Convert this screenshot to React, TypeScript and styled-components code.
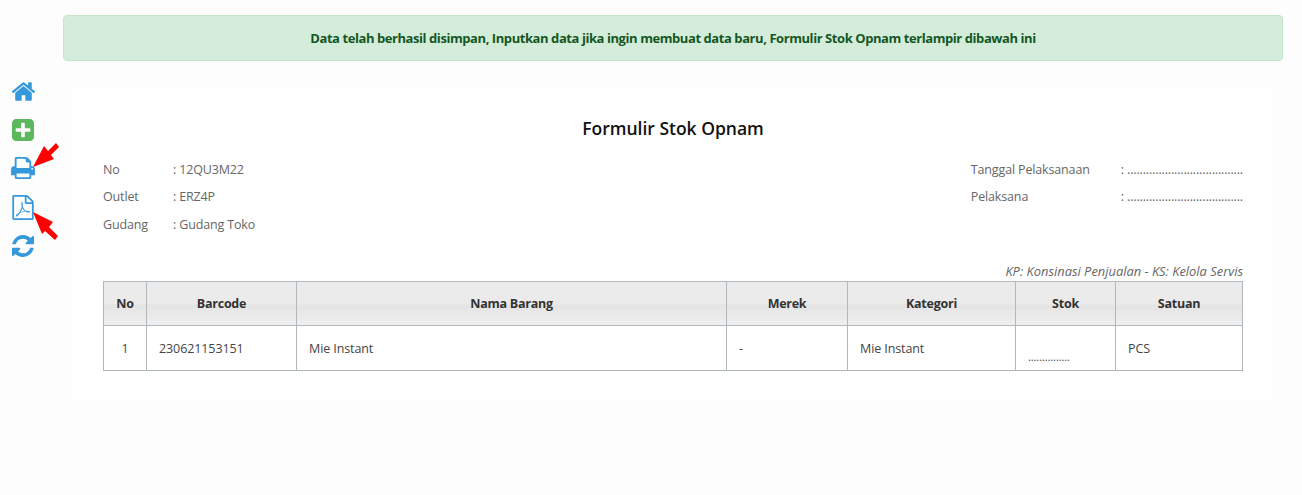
import React from "react";
import styled, { createGlobalStyle } from "styled-components";

const Global = createGlobalStyle`
  html, body { margin: 0; padding: 0; background: #fdfdfd; }
  body { font-family: "Open Sans", "Noto Sans", sans-serif; font-size: 13px; color: #555; }
`;

const Page = styled.div`
  display: flex;
  width: 1302px;
  height: 495px;
  overflow: hidden;
`;

const Sidebar = styled.nav`
  width: 63px;
  flex: none;
  padding-top: 72px;
  display: flex;
  flex-direction: column;
  align-items: flex-start;
  box-sizing: border-box;
  position: relative;
`;

const IconSlot = styled.div<{ $h: number; $c?: string }>`
  width: 46px;
  height: ${(p) => p.$h}px;
  display: flex;
  align-items: center;
  justify-content: center;
  color: ${(p) => p.$c ?? "#3498db"};
`;

const Arrows = styled.svg`
  position: absolute;
  left: 30px;
  top: 140px;
  width: 32px;
  height: 104px;
`;

const Main = styled.main`
  width: 1220px;
  padding-top: 15px;
`;

const Alert = styled.div`
  height: 46px;
  box-sizing: border-box;
  background: #d4edda;
  border: 1px solid #c3e6cb;
  border-radius: 4px;
  color: #155724;
  font-weight: 700;
  font-size: 13px;
  letter-spacing: -0.43px;
  display: flex;
  align-items: center;
  justify-content: center;
`;

const Card = styled.section`
  margin: 27px 10px 0;
  height: 312px;
  box-sizing: border-box;
  background: #fff;
  padding: 28px 30px 0;
`;

const Title = styled.h1`
  margin: 0;
  height: 24px;
  line-height: 24px;
  text-align: center;
  font-size: 17.5px;
  font-weight: 600;
  color: #111;
`;

const Meta = styled.div`
  margin-top: 20px;
  display: flex;
  justify-content: space-between;
  height: 103px;
`;

const MetaColumn = styled.div``;

const MetaRow = styled.div<{ $label: number }>`
  display: grid;
  grid-template-columns: ${(p) => p.$label}px auto;
  height: 27.4px;
  line-height: 20px;
  font-size: 12.5px;
  letter-spacing: -0.15px;
  color: #666;
`;

const Note = styled.div`
  text-align: right;
  font-style: italic;
  font-size: 12.9px;
  line-height: 17px;
  color: #666;
  height: 18px;
`;

const Table = styled.table`
  width: 1139px;
  border-collapse: collapse;
  table-layout: fixed;
  font-size: 12.5px;
`;

const Th = styled.th<{ $w: number }>`
  width: ${(p) => p.$w}px;
  height: 44px;
  box-sizing: border-box;
  padding: 0;
  border: 1px solid #aeb8bd;
  text-align: center;
  font-weight: 700;
  letter-spacing: -0.25px;
  color: #333;
  background: linear-gradient(#ebebeb 0%, #ebebeb 50%, #e4e4e4 52%, #efefef 100%);
`;

const Td = styled.td<{ $center?: boolean }>`
  height: 45px;
  box-sizing: border-box;
  padding: 0 12px;
  border: 1px solid #aeb8bd;
  color: #444;
  letter-spacing: -0.1px;
  text-align: ${(p) => (p.$center ? "center" : "left")};
`;

const Dots = styled.span`
  display: block;
  padding-top: 18px;
  line-height: 18px;
  font-size: 11px;
  letter-spacing: -0.1px;
`;

const HomeIcon = () => (
  <svg width="23" height="19" viewBox="96 256 1600 1280" fill="currentColor">
    <path d="M1472 992v480q0 26-19 45t-45 19h-384v-384h-256v384h-384q-26 0-45-19t-19-45v-480q0-1 .5-3t.5-3l575-474 575 474q1 2 1 6zm223-69l-62 74q-8 9-21 11h-3q-13 0-21-7l-692-577-692 577q-12 8-24 7-13-2-21-11l-62-74q-8-10-7-23.500t11-21.500l719-599q32-26 76-26t76 26l244 204v-195q0-14 9-23t23-9h192q14 0 23 9t9 23v408l219 182q10 8 11 21.500t-7 23.500z" />
  </svg>
);

const PlusIcon = () => (
  <svg width="22" height="22" viewBox="128 128 1536 1536" fill="currentColor">
    <path d="M1408 960v-128q0-26-19-45t-45-19h-320v-320q0-26-19-45t-45-19h-128q-26 0-45 19t-19 45v320h-320q-26 0-45 19t-19 45v128q0 26 19 45t45 19h320v320q0 26 19 45t45 19h128q26 0 45-19t19-45v-320h320q26 0 45-19t19-45zm256-544v960q0 119-84.500 203.500t-203.500 84.500h-960q-119 0-203.500-84.500t-84.500-203.500v-960q0-119 84.500-203.500t203.500-84.500h960q119 0 203.500 84.500t84.500 203.500z" />
  </svg>
);

const PrintIcon = () => (
  <svg width="24" height="22" viewBox="64 128 1664 1536" fill="currentColor">
    <path d="M448 1536h896v-256h-896v256zm0-640h896v-384h-160q-40 0-68-28t-28-68v-160h-640v640zm1152 64q0-26-19-45t-45-19-45 19-19 45 19 45 45 19 45-19 19-45zm128 0v416q0 13-9.500 22.500t-22.500 9.500h-224v160q0 40-28 68t-68 28h-960q-40 0-68-28t-28-68v-160h-224q-13 0-22.500-9.500t-9.500-22.500v-416q0-79 56.500-135.500t135.500-56.500h64v-544q0-40 28-68t68-28h672q40 0 88 20t76 48l152 152q28 28 48 76t20 88v256h64q79 0 135.500 56.500t56.500 135.500z" />
  </svg>
);

const PdfIcon = () => (
  <svg width="22" height="25" viewBox="128 0 1536 1792" fill="currentColor">
    <path d="M1596 380q28 28 48 76t20 88v1152q0 40-28 68t-68 28h-1344q-40 0-68-28t-28-68v-1600q0-40 28-68t68-28h896q40 0 88 20t76 48zm-444-244v376h376q-10-29-22-41l-313-313q-12-12-41-22zm384 1528v-1024h-416q-40 0-68-28t-28-68v-416h-768v1536h1280zm-514-593q33 26 84 56 59-7 117-7 147 0 177 49 16 22 2 52 0 1-1 2l-2 2v1q-6 38-71 38-48 0-115-20t-130-53q-221 24-392 83-153 262-242 262-15 0-28-7l-24-12q-1-1-6-5-10-10-6-36 9-40 56-91.500t132-96.500q14-9 23 6 2 2 2 4 52-85 107-197 68-136 104-262-24-82-30.500-159.500t6.500-127.500q11-40 42-40h22q23 0 35 15 18 21 9 68-2 6-4 8 1 3 1 8v30q-2 123-14 192 55 164 146 238zm-576 411q52-24 137-158-51 40-87.500 84t-49.500 74zm398-920q-15 42-2 132 1-7 7-44 0-3 7-43 1-4 4-8-1-1-1-2-1-2-1-3-1-22-13-36 0 1-1 2v2zm-124 661q135-54 284-81-2-1-13-9.500t-16-13.500q-76-67-127-176-27 86-83 197-30 56-45 83zm646-16q-24-24-140-24 76 28 124 28 14 0 18-1 0-1-2-3z" />
  </svg>
);

const SyncIcon = () => (
  <svg width="22" height="22" viewBox="128 128 1536 1536" fill="currentColor">
    <path d="M1639 1056q0 5-1 7-64 268-268 434.500t-478 166.500q-146 0-282.500-55t-243.500-157l-129 129q-19 19-45 19t-45-19-19-45v-448q0-26 19-45t45-19h448q26 0 45 19t19 45-19 45l-137 137q71 66 161 102t187 36q134 0 250-65t186-179q11-17 53-117 8-23 30-23h192q13 0 22.500 9.500t9.500 22.500zm25-800v448q0 26-19 45t-45 19h-448q-26 0-45-19t-19-45 19-45l138-138q-148-137-349-137-134 0-250 65t-186 179q-11 17-53 117-8 23-30 23h-199q-13 0-22.500-9.500t-9.500-22.500v-7q65-268 270-434.500t480-166.500q146 0 284 55.500t245 156.500l130-129q19-19 45-19t45 19 19 45z" />
  </svg>
);

const columns: [string, number][] = [
  ["No", 43], ["Barcode", 150], ["Nama Barang", 430], ["Merek", 121],
  ["Kategori", 168], ["Stok", 100], ["Satuan", 127],
];

export default function App() {
  return (
    <Page>
      <Global />
      <Sidebar>
        <IconSlot $h={38}><HomeIcon /></IconSlot>
        <IconSlot $h={40} $c="#5cb85c"><PlusIcon /></IconSlot>
        <IconSlot $h={36}><PrintIcon /></IconSlot>
        <IconSlot $h={42}><PdfIcon /></IconSlot>
        <IconSlot $h={36}><SyncIcon /></IconSlot>
        <Arrows viewBox="30 140 32 104">
          <path fill="#f00" d="M33 167 L44 146 L48 151 L56 143 L59 147 L51 155 L54 159 Z" />
          <path fill="#f00" d="M33 212 L53 222 L49 227 L58 236 L55 240 L45 231 L42 234 Z" />
        </Arrows>
      </Sidebar>
      <Main>
        <Alert>Data telah berhasil disimpan, Inputkan data jika ingin membuat data baru, Formulir Stok Opnam terlampir dibawah ini</Alert>
        <Card>
          <Title>Formulir Stok Opnam</Title>
          <Meta>
            <MetaColumn>
              <MetaRow $label={70}><span>No</span><span>: 12QU3M22</span></MetaRow>
              <MetaRow $label={70}><span>Outlet</span><span>: ERZ4P</span></MetaRow>
              <MetaRow $label={70}><span>Gudang</span><span>: Gudang Toko</span></MetaRow>
            </MetaColumn>
            <MetaColumn>
              <MetaRow $label={150}><span>Tanggal Pelaksanaan</span><span>: .....................................</span></MetaRow>
              <MetaRow $label={150}><span>Pelaksana</span><span>: .....................................</span></MetaRow>
            </MetaColumn>
          </Meta>
          <Note>KP: Konsinasi Penjualan - KS: Kelola Servis</Note>
          <Table>
            <thead>
              <tr>{columns.map(([n, w]) => <Th key={n} $w={w}>{n}</Th>)}</tr>
            </thead>
            <tbody>
              <tr>
                <Td $center>1</Td>
                <Td>230621153151</Td>
                <Td>Mie Instant</Td>
                <Td>-</Td>
                <Td>Mie Instant</Td>
                <Td><Dots>...............</Dots></Td>
                <Td>PCS</Td>
              </tr>
            </tbody>
          </Table>
        </Card>
      </Main>
    </Page>
  );
}
